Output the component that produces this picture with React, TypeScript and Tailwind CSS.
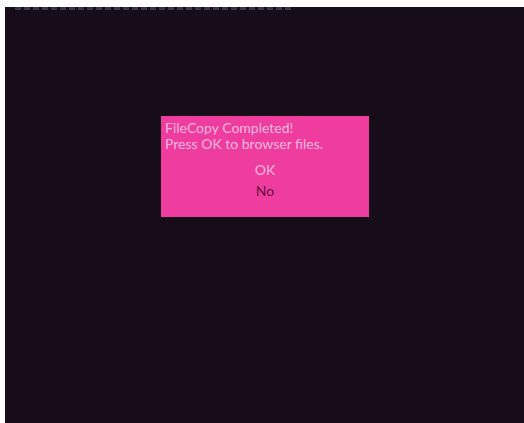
export default function App() {
  return (
    <div className="w-[524px] h-[423px] bg-white pl-[5px] pt-[7px] flex overflow-hidden">
      <div className="flex-1 flex flex-col bg-[#170d19]">
        {/* cut-off status text along the top edge */}
        <div className="ml-[10px] w-[276px] border-t-[3px] border-dashed border-[#4d4752]/70" />

        <div
          className="ml-[156px] mt-[106px] w-[208px] h-[101px] bg-[#ee3d9f] pl-[4px] pt-[4px] flex flex-col text-[14px]"
          style={{ fontFamily: 'Lato, "Open Sans", sans-serif' }}
        >
          <p className="leading-[16px] text-[#f8b6dc]">FileCopy Completed!</p>
          <p className="leading-[16px] text-[#f8b6dc]">Press OK to browser files.</p>
          <div className="mt-[10px] flex flex-col items-center gap-[5px] pr-[4px]">
            <span className="leading-[16px] text-[#f8b6dc]">OK</span>
            <span className="leading-[16px] text-[#6a0f3f]">No</span>
          </div>
        </div>
      </div>
    </div>
  );
}
